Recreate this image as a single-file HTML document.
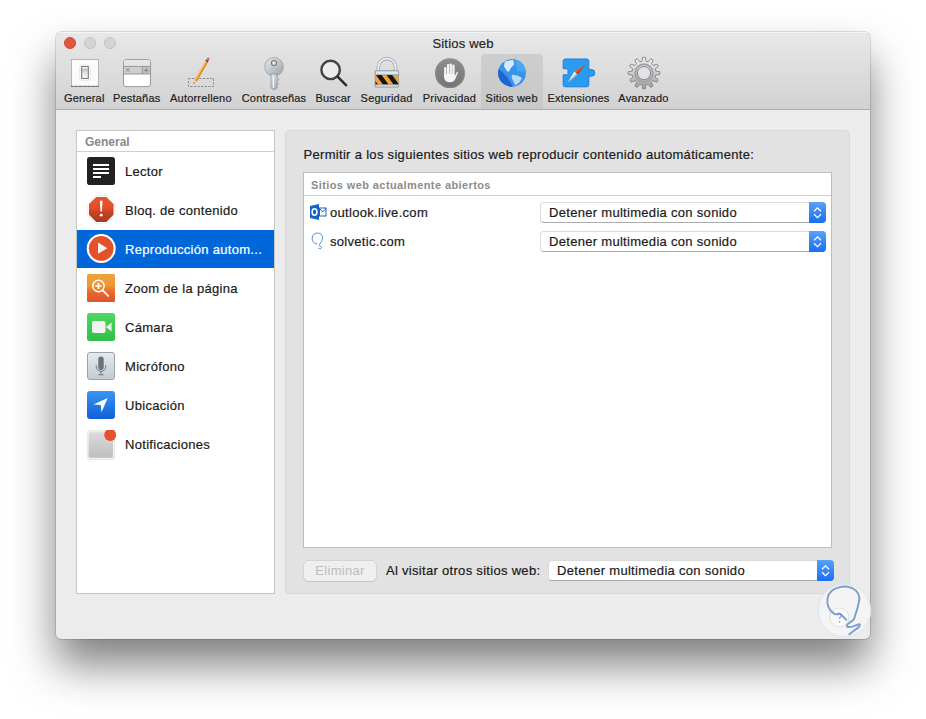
<!DOCTYPE html>
<html><head><meta charset="utf-8">
<style>
*{margin:0;padding:0;box-sizing:border-box}
html,body{width:926px;height:719px;overflow:hidden;background:#fff}
body{position:relative;font-family:"Liberation Sans",sans-serif;color:#1a1a1a;-webkit-text-stroke:0.2px currentColor}
.abs{position:absolute}
#win{position:absolute;left:56px;top:32px;width:814px;height:607px;border-radius:5px;background:#ececec;
 box-shadow:0 0 0 0.5px rgba(0,0,0,0.25),0 26px 44px 0px rgba(0,0,0,0.5);overflow:hidden}
#tb{position:absolute;left:0;top:0;width:814px;height:78px;background:linear-gradient(#e8e8e8,#d2d2d2);border-bottom:1px solid #aeaeae;box-shadow:inset 0 1px 0 rgba(255,255,255,0.55)}
.tl{position:absolute;top:5px;width:12px;height:12px;border-radius:50%;background:#d4d4d4;border:0.5px solid #c2c2c2}
.title{position:absolute;left:0;width:814px;top:3.5px;text-align:center;font-size:13px;letter-spacing:0.2px;color:#262626}
.lab{position:absolute;top:60px;font-size:11px;letter-spacing:0.2px;color:#1e1e1e;white-space:nowrap;transform:translateX(-50%)}
.sel{position:absolute;left:425px;top:22px;width:62px;height:55px;background:linear-gradient(#cecece,#c8c8c8);border-radius:4px 4px 0 0}
#side{position:absolute;left:20px;top:98px;width:199px;height:464px;background:#fff;border:1px solid #c6c6c6}
.sh{position:absolute;left:0;top:0;width:197px;height:21px;border-bottom:1px solid #cfcfcf;font-weight:bold;font-size:12px;color:#8a8a8a;padding:4px 0 0 8px;-webkit-text-stroke:0}
.row{position:absolute;left:0;width:197px;height:39px}
.row .t{position:absolute;left:48px;top:12px;font-size:13px;letter-spacing:0.3px;color:#1a1a1a;white-space:nowrap}
.row.on{background:#0067d9;height:38px}
.row.on .t{color:#fff}
.ic{position:absolute;left:10px;top:5px;width:28px;height:28px}
#panel{position:absolute;left:229px;top:98px;width:565px;height:464px;background:#e2e2e2;border:1px solid #d9d9d9;border-radius:4px}
.ptxt{position:absolute;left:17.5px;top:16px;font-size:13px;letter-spacing:0.31px;white-space:nowrap;color:#1a1a1a}
#tbl{position:absolute;left:17px;top:41px;width:529px;height:376px;background:#fff;border:1px solid #bdbdbd}
.th{position:absolute;left:0;top:0;width:527px;height:23px;border-bottom:1px solid #cdcdcd;font-weight:bold;font-size:11px;letter-spacing:0.4px;color:#8c8c8c;padding:6px 0 0 7px;-webkit-text-stroke:0}
.site{position:absolute;left:26px;font-size:13px;letter-spacing:0.3px;white-space:nowrap;color:#1a1a1a}
.pop{position:absolute;height:21px;background:#fff;border-radius:4px;border:1px solid #dadada;border-bottom-color:#ababab;font-size:13px;letter-spacing:0.3px;color:#1a1a1a;white-space:nowrap}
.pop .pt{position:absolute;left:8px;top:2px}
.pop .ar{position:absolute;right:-1px;top:-1px;width:17px;height:21px;border-radius:0 4px 4px 0;background:linear-gradient(#5aa1f7,#1a6ef2)}
.btn{position:absolute;left:18px;top:430px;width:72px;height:20px;background:#efefef;border-radius:4px;box-shadow:0 0 0 0.5px rgba(0,0,0,0.13),0 0.5px 0.5px rgba(0,0,0,0.15);font-size:13px;letter-spacing:0.3px;color:#bdbdbd;text-align:center;padding-top:2px;-webkit-text-stroke:0}
.ltxt{position:absolute;left:100px;top:432px;font-size:13px;letter-spacing:0.3px;white-space:nowrap;color:#1a1a1a}
</style></head><body>
<svg width="0" height="0" style="position:absolute">
<defs>
 <linearGradient id="gSil" x1="0" y1="0" x2="0" y2="1"><stop offset="0" stop-color="#e2e5e8"/><stop offset="1" stop-color="#9ea3a8"/></linearGradient>
 <linearGradient id="gKey" x1="0" y1="0" x2="1" y2="1"><stop offset="0" stop-color="#e6ecf1"/><stop offset="1" stop-color="#9aa1a7"/></linearGradient>
 <linearGradient id="gGear" x1="0" y1="0" x2="0" y2="1"><stop offset="0" stop-color="#d4d4d4"/><stop offset="1" stop-color="#8c8c8c"/></linearGradient>
 <linearGradient id="gPriv" x1="0" y1="0" x2="0" y2="1"><stop offset="0" stop-color="#8e8e8e"/><stop offset="1" stop-color="#747474"/></linearGradient>
 <radialGradient id="gGlobe" cx="0.35" cy="0.3" r="0.8"><stop offset="0" stop-color="#6cb8ff"/><stop offset="0.6" stop-color="#2a7ed8"/><stop offset="1" stop-color="#1553a8"/></radialGradient>
 <linearGradient id="gPuz" x1="0" y1="0" x2="0" y2="1"><stop offset="0" stop-color="#46a2f6"/><stop offset="1" stop-color="#1d79e6"/></linearGradient>
 <linearGradient id="gZoom" x1="0" y1="0" x2="0" y2="1"><stop offset="0" stop-color="#eea238"/><stop offset="0.4" stop-color="#ec9a33"/><stop offset="0.65" stop-color="#e66a2e"/><stop offset="1" stop-color="#e3502a"/></linearGradient>
 <linearGradient id="gCam" x1="0" y1="0" x2="0" y2="1"><stop offset="0" stop-color="#4fd862"/><stop offset="1" stop-color="#2fbf45"/></linearGradient>
 <linearGradient id="gMic" x1="0" y1="0" x2="0" y2="1"><stop offset="0" stop-color="#e3eaf0"/><stop offset="1" stop-color="#c3cbd3"/></linearGradient>
 <linearGradient id="gLoc" x1="0" y1="0" x2="0" y2="1"><stop offset="0" stop-color="#3796f2"/><stop offset="1" stop-color="#135fd6"/></linearGradient>
 <linearGradient id="gNot" x1="0" y1="0" x2="0" y2="1"><stop offset="0" stop-color="#dcdcdc"/><stop offset="1" stop-color="#bdbdbd"/></linearGradient>
 <linearGradient id="gSw" x1="0" y1="0" x2="0" y2="1"><stop offset="0" stop-color="#f4f4f4"/><stop offset="0.15" stop-color="#f4f4f4"/><stop offset="0.2" stop-color="#bdbdbd"/><stop offset="0.55" stop-color="#e6e6e6"/><stop offset="1" stop-color="#f6f8fa"/></linearGradient>
 <linearGradient id="gPop" x1="0" y1="0" x2="0" y2="1"><stop offset="0" stop-color="#62a8f8"/><stop offset="1" stop-color="#1669ee"/></linearGradient>
</defs>
</svg>

<div id="win">
 <div id="tb">
  <div class="tl" style="left:8px;background:#e2543c;border-color:#cf4632"></div>
  <div class="tl" style="left:28px"></div>
  <div class="tl" style="left:48px"></div>
  <div class="title">Sitios web</div>
  <div class="sel"></div>
  <!-- labels -->
  <div class="lab" style="left:28.3px">General</div>
  <div class="lab" style="left:80.7px">Pestañas</div>
  <div class="lab" style="left:144.9px">Autorrelleno</div>
  <div class="lab" style="left:218px">Contraseñas</div>
  <div class="lab" style="left:277.2px">Buscar</div>
  <div class="lab" style="left:330.6px">Seguridad</div>
  <div class="lab" style="left:393.5px">Privacidad</div>
  <div class="lab" style="left:455.7px">Sitios web</div>
  <div class="lab" style="left:522.5px">Extensiones</div>
  <div class="lab" style="left:587.5px">Avanzado</div>
 </div>
 <div id="side">
  <div class="sh">General</div>
  <div class="row" style="top:21px"><div class="t">Lector</div></div>
  <div class="row" style="top:60px"><div class="t">Bloq. de contenido</div></div>
  <div class="row on" style="top:99px"><div class="t">Reproducción autom...</div></div>
  <div class="row" style="top:138px"><div class="t">Zoom de la página</div></div>
  <div class="row" style="top:177px"><div class="t">Cámara</div></div>
  <div class="row" style="top:216px"><div class="t">Micrófono</div></div>
  <div class="row" style="top:255px"><div class="t">Ubicación</div></div>
  <div class="row" style="top:294px"><div class="t">Notificaciones</div></div>
 </div>
 <div id="panel">
  <div class="ptxt">Permitir a los siguientes sitios web reproducir contenido automáticamente:</div>
  <div id="tbl">
   <div class="th">Sitios web actualmente abiertos</div>
   <div class="site" style="top:31.6px">outlook.live.com</div>
   <div class="site" style="top:60.6px">solvetic.com</div>
   <div class="pop" style="left:236px;top:29px;width:286px"><div class="pt">Detener multimedia con sonido</div><div class="ar"><svg width="17" height="20" style="position:absolute;left:0;top:0"><path d="M5 9.2 L8.5 5.8 L12 9.2 M5 12.3 L8.5 15.7 L12 12.3" fill="none" stroke="#fff" stroke-width="1.25"/></svg></div></div>
   <div class="pop" style="left:236px;top:58px;width:286px"><div class="pt">Detener multimedia con sonido</div><div class="ar"><svg width="17" height="20" style="position:absolute;left:0;top:0"><path d="M5 9.2 L8.5 5.8 L12 9.2 M5 12.3 L8.5 15.7 L12 12.3" fill="none" stroke="#fff" stroke-width="1.25"/></svg></div></div>
  </div>
  <div class="btn">Eliminar</div>
  <div class="ltxt">Al visitar otros sitios web:</div>
  <div class="pop" style="left:262px;top:429px;width:286px"><div class="pt">Detener multimedia con sonido</div><div class="ar"><svg width="17" height="20" style="position:absolute;left:0;top:0"><path d="M5 9.2 L8.5 5.8 L12 9.2 M5 12.3 L8.5 15.7 L12 12.3" fill="none" stroke="#fff" stroke-width="1.25"/></svg></div></div>
 </div>
</div>

<!-- toolbar icons -->
<svg class="abs" style="left:71px;top:59px" width="28" height="28">
 <rect x="0.5" y="0.5" width="27" height="27" fill="#fbfbfb" stroke="#a8a8a8" stroke-width="0.8"/>
 <line x1="0" y1="27.4" x2="28" y2="27.4" stroke="#5e5e5e" stroke-width="1.1" stroke-dasharray="0.8 0.5"/>
 <rect x="8.6" y="6" width="10.8" height="15.4" rx="2.5" fill="#fff" stroke="#e2e2e2" stroke-width="0.8"/>
 <rect x="10.7" y="7.5" width="6.6" height="11.9" fill="url(#gSw)" stroke="#727272" stroke-width="1"/>
</svg>
<svg class="abs" style="left:123px;top:59px" width="29" height="29">
 <rect x="0.5" y="0.6" width="27" height="27" rx="2.6" fill="#fff" stroke="#8e8e8e" stroke-width="0.9"/>
 <rect x="1" y="1.1" width="26" height="6.3" rx="2" fill="#e6e6e6"/>
 <rect x="1" y="7.4" width="26" height="7.6" fill="#cfcfcf"/>
 <rect x="19.3" y="7.4" width="7.7" height="7.6" fill="#c4c4c4"/>
 <path d="M0.6 7.4 H27.4 M0.6 15 H27.4 M19.3 7.4 V15" stroke="#8e8e8e" stroke-width="0.9"/>
 <path d="M3.2 9.3 l3.2 3.4 M6.4 9.3 l-3.2 3.4" stroke="#7e7e7e" stroke-width="0.9"/>
 <path d="M23.2 9 v4.6 M20.9 11.3 h4.6" stroke="#7e7e7e" stroke-width="0.9"/>
</svg>
<svg class="abs" style="left:186px;top:55px" width="32" height="34">
 <rect x="2.5" y="23.5" width="25" height="8" fill="none" stroke="#8a8a8a" stroke-dasharray="2.2 1.4"/>
 <path d="M8.15 25.27 L19.44 5.78 L21.86 7.18 L10.57 26.67 Z" fill="#f2a93a"/>
 <path d="M9.36 25.97 L20.65 6.48 L21.86 7.18 L10.57 26.67 Z" fill="#d48a22"/>
 <path d="M9.0 25.7 L20.1 6.2" stroke="#fbe0a8" stroke-width="0.6"/>
 <path d="M7.6 29 L8.15 25.27 L10.57 26.67 Z" fill="#f3d9a8"/>
 <path d="M7.6 29 L7.85 27.3 L8.95 27.95 Z" fill="#333"/>
 <path d="M19.44 5.78 L21.86 7.18 L22.61 5.9 L20.19 4.5 Z" fill="#3a3a3a"/>
 <path d="M20.19 4.5 L22.61 5.9 L23.81 3.8 L21.39 2.4 Z" fill="#a878d0"/>
 <circle cx="22.5" cy="3.2" r="0.6" fill="#e05050"/>
</svg>
<svg class="abs" style="left:262px;top:56px" width="24" height="36">
 <circle cx="12" cy="10.8" r="9.3" fill="url(#gKey)" stroke="#8d9399" stroke-width="0.7"/>
 <circle cx="12" cy="7" r="2.5" fill="#e6e6e6" stroke="#6f757b" stroke-width="1.1"/>
 <path d="M9 18 H15 V22 L17 23.5 L15 25 V26.5 L16.5 28 L15 29.5 V32 L12 34 L9 32 Z" fill="url(#gKey)" stroke="#858b91" stroke-width="0.7"/>
 <line x1="11.5" y1="20" x2="11.5" y2="32" stroke="#f5f5f5" stroke-width="1"/>
</svg>
<svg class="abs" style="left:316px;top:56px" width="34" height="34">
 <circle cx="14.6" cy="13.9" r="9.2" fill="#ebebeb" stroke="#424242" stroke-width="2.4"/>
 <line x1="21.6" y1="20.6" x2="30" y2="29.2" stroke="#2e2e2e" stroke-width="2.6" stroke-linecap="round"/>
</svg>
<svg class="abs" style="left:372px;top:55px" width="30" height="34">
 <path d="M6.3 16.5 V12.3 A8.6 8.6 0 0 1 23.5 12.3 V16.5" fill="none" stroke="#98a4b0" stroke-width="3.4"/>
 <path d="M6.3 16.5 V12.3 A8.6 8.6 0 0 1 23.5 12.3 V16.5" fill="none" stroke="#eef2f6" stroke-width="1.8"/>
 <rect x="3.2" y="15.9" width="23.4" height="16.1" rx="0.8" fill="#eea23a" stroke="#8d96a0" stroke-width="0.7"/>
 <clipPath id="lk"><rect x="3.5" y="19.8" width="22.8" height="10"/></clipPath>
 <g clip-path="url(#lk)" fill="#141414">
  <path d="M3.8 19.8 H9.4 L16.7 29.8 H11.1Z"/><path d="M14.4 19.8 H20 L27.3 29.8 H21.7Z"/><path d="M-6.8 19.8 H-1.2 L6.1 29.8 H0.5Z"/>
 </g>
 <rect x="3.2" y="15.9" width="23.4" height="3.9" fill="#dfe6ed" stroke="#8d96a0" stroke-width="0.7"/>
 <rect x="3.2" y="29.8" width="23.4" height="2.2" fill="#d5dce3" stroke="#8d96a0" stroke-width="0.6"/>
</svg>
<svg class="abs" style="left:435px;top:57px" width="31" height="31">
 <circle cx="15" cy="16.2" r="15" fill="url(#gPriv)"/>
 <circle cx="15" cy="16.2" r="14.5" fill="none" stroke="#9a9a9a" stroke-width="0.8" opacity="0.6"/>
 <g fill="#f4f4f4">
  <rect x="9.1" y="10" width="2.3" height="11" rx="1.1"/>
  <rect x="11.9" y="7" width="2.3" height="13" rx="1.1"/>
  <rect x="14.6" y="6.4" width="2.3" height="13" rx="1.1"/>
  <rect x="17.3" y="7.6" width="2.3" height="13" rx="1.1"/>
  <path d="M9.1 17 H19.6 V19.5 L21.8 15.2 C22.3 14.4 23.3 14.7 23 15.6 L20.5 21.5 C19.6 23.8 18 25.3 15 25.3 C11.5 25.3 9.3 23.5 9.1 20.5 Z"/>
 </g>
</svg>
<svg class="abs" style="left:497px;top:58px" width="30" height="30">
 <clipPath id="gc"><circle cx="15" cy="14.9" r="13.9"/></clipPath>
 <g clip-path="url(#gc)">
  <rect x="0" y="0" width="30" height="30" fill="#3a93ea"/>
  <path d="M0 10 C6 14 12 19 16 30 H0Z" fill="#1f66cc"/>
  <path d="M18 2 C24 3 29 8 29 14 L20 13 Z" fill="#45aaf2"/>
  <path d="M7.8 3.5 L16.1 1.8 L17.3 6.2 L13.9 10.1 L11.7 14 L9.5 12.4 L7 8.5 Z" fill="#d6eafb"/>
  <path d="M15 16.8 L20.6 17.4 L25 20.1 L22.8 24 L18.4 27.4 L16.1 22.9 L14.5 19 Z" fill="#b9d9f5"/>
 </g>
</svg>
<svg class="abs" style="left:561px;top:57px" width="37" height="32">
 <path d="M4.2 2 H25.8 A2 2 0 0 1 27.8 4 V12.6 H30.5 A3.3 3.3 0 0 1 33.8 15.9 A3.3 3.3 0 0 1 30.5 19.2 H27.8 V27.8 A2 2 0 0 1 25.8 29.8 H4.2 A2 2 0 0 1 2.2 27.8 V17.8 H5.5 A1.5 1.5 0 0 0 7 16.3 V13.2 A1.5 1.5 0 0 0 5.5 11.7 H2.2 V4 A2 2 0 0 1 4.2 2 Z" fill="#2a9bf0" stroke="#1b7fe3" stroke-width="1"/>
 <path d="M24.8 7.2 L13.4 14.6 L15.2 16.4 Z" fill="#f05a2a"/>
 <path d="M24.8 7.2 L15.2 16.4 L16.6 17.6 Z" fill="#b8381c"/>
 <path d="M6.8 25.5 L13.4 14.6 L15.2 16.4 Z" fill="#fafafa"/>
 <path d="M6.8 25.5 L15.2 16.4 L16.6 17.6 Z" fill="#c4c4c4"/>
</svg>
<svg class="abs" style="left:627px;top:56px" width="34" height="34">
 <linearGradient id="gG2" x1="0" y1="0" x2="0" y2="1"><stop offset="0" stop-color="#eef1f4"/><stop offset="0.5" stop-color="#c9cdd1"/><stop offset="1" stop-color="#9a9c9e"/></linearGradient>
 <path d="M15.60 1.36 L18.40 1.36 L18.88 5.25 L21.30 5.90 L23.65 2.77 L26.09 4.17 L24.55 7.77 L26.33 9.55 L29.93 8.01 L31.33 10.45 L28.20 12.80 L28.85 15.22 L32.74 15.70 L32.74 18.50 L28.85 18.98 L28.20 21.40 L31.33 23.75 L29.93 26.19 L26.33 24.65 L24.55 26.43 L26.09 30.03 L23.65 31.43 L21.30 28.30 L18.88 28.95 L18.40 32.84 L15.60 32.84 L15.12 28.95 L12.70 28.30 L10.35 31.43 L7.91 30.03 L9.45 26.43 L7.67 24.65 L4.07 26.19 L2.67 23.75 L5.80 21.40 L5.15 18.98 L1.26 18.50 L1.26 15.70 L5.15 15.22 L5.80 12.80 L2.67 10.45 L4.07 8.01 L7.67 9.55 L9.45 7.77 L7.91 4.17 L10.35 2.77 L12.70 5.90 L15.12 5.25Z" fill="url(#gG2)" stroke="#858585" stroke-width="0.9" stroke-linejoin="round"/>
 <circle cx="17" cy="17.1" r="8.8" fill="none" stroke="#a3a3a3" stroke-width="2"/>
 <circle cx="17" cy="17.1" r="6.6" fill="#e3e1e3" stroke="#7d7d7d" stroke-width="0.9"/>
</svg>

<!-- sidebar icons -->
<svg class="abs" style="left:87px;top:157px" width="28" height="28">
 <rect x="0" y="0" width="28" height="28" rx="2.8" fill="#222"/>
 <rect x="6" y="7" width="16" height="2" fill="#fff"/><rect x="6" y="11" width="16" height="2" fill="#fff"/>
 <rect x="6" y="15" width="16" height="2" fill="#fff"/><rect x="6" y="19" width="8" height="2" fill="#fff"/>
</svg>
<svg class="abs" style="left:87px;top:195px" width="29" height="29">
 <linearGradient id="gBlq" x1="0" y1="0" x2="0" y2="1"><stop offset="0" stop-color="#e4572f"/><stop offset="0.45" stop-color="#e24f28"/><stop offset="0.6" stop-color="#c44424"/><stop offset="1" stop-color="#a8391f"/></linearGradient>
 <path d="M8.7 0.6 H19.8 L27.9 8.7 V20.2 L19.8 28.3 H8.7 L0.6 20.2 V8.7 Z" fill="none" stroke="#d8d8d8" stroke-width="0.6"/>
 <path d="M8.9 1.3 H19.6 L27.2 8.9 V20 L19.6 27.6 H8.9 L1.3 20 V8.9 Z" fill="url(#gBlq)" stroke="#fff" stroke-width="1.3"/>
 <path d="M12.9 5.8 H15.5 L14.9 16.5 H13.5 Z" fill="#fff"/>
 <circle cx="14.2" cy="20.2" r="1.4" fill="#fff"/>
</svg>
<svg class="abs" style="left:86px;top:234px" width="30" height="30">
 <circle cx="15.2" cy="14.4" r="14.5" fill="#fff"/>
 <circle cx="15.2" cy="14.4" r="12.4" fill="#e4522a"/>
 <path d="M12 8.6 L21.3 14.2 L12 19.8 Z" fill="#f4f4f4"/>
</svg>
<svg class="abs" style="left:87px;top:274px" width="28" height="28">
 <rect x="0" y="0" width="28" height="28" rx="1.5" fill="url(#gZoom)"/>
 <circle cx="11.5" cy="12" r="5.7" fill="none" stroke="#fff" stroke-width="1.5"/>
 <path d="M11.5 9.1 V14.9 M8.6 12 H14.4" stroke="#fff" stroke-width="1.7"/>
 <line x1="15.7" y1="16.3" x2="21.3" y2="22" stroke="#fff" stroke-width="1.7" stroke-linecap="round"/>
</svg>
<svg class="abs" style="left:87px;top:313px" width="28" height="28">
 <rect x="0" y="0" width="28" height="28" rx="2.5" fill="url(#gCam)"/>
 <rect x="5" y="8" width="13.5" height="12" rx="2" fill="#f3f3f3"/>
 <path d="M19 14 L24.5 9.5 V18.5 Z" fill="#f3f3f3"/>
</svg>
<svg class="abs" style="left:87px;top:352px" width="28" height="28">
 <rect x="0.5" y="0.5" width="27" height="27" rx="2.5" fill="url(#gMic)" stroke="#9ba2a8"/>
 <rect x="11.3" y="4.6" width="5.4" height="13.4" rx="2.7" fill="#6a7178"/>
 <path d="M9.2 13 V14.5 A4.8 4.8 0 0 0 18.8 14.5 V13" fill="none" stroke="#6f767c" stroke-width="1"/>
 <path d="M14 19.3 V22.5 M11.3 22.8 H16.7" stroke="#6f767c" stroke-width="1"/>
</svg>
<svg class="abs" style="left:87px;top:391px" width="28" height="28">
 <rect x="0" y="0" width="28" height="28" rx="3" fill="url(#gLoc)"/>
 <path d="M20.7 7 L6.4 13.6 L13.8 13.9 L14.5 21.3 Z" fill="#fff"/>
</svg>
<svg class="abs" style="left:87px;top:429.8px" width="30" height="30">
 <rect x="0.8" y="1.5" width="26" height="27" rx="2" fill="url(#gNot)" stroke="#f5f5f5" stroke-width="1.6"/>
 <rect x="0" y="0.8" width="27.6" height="28.5" rx="2.5" fill="none" stroke="#d0d0d0" stroke-width="0.6"/>
 <circle cx="23.2" cy="5" r="6" fill="#e5502e"/>
</svg>

<!-- site icons -->
<svg class="abs" style="left:310px;top:204px" width="17" height="17">
 <path d="M0 2 L9 0 V16 L0 14 Z" fill="#1565c8"/>
 <ellipse cx="4.5" cy="8" rx="2.4" ry="3.2" fill="none" stroke="#fff" stroke-width="1.5"/>
 <rect x="9.5" y="4" width="6.5" height="8" fill="#fff" stroke="#1565c8" stroke-width="1"/>
 <path d="M9.5 4.5 L12.7 8 L16 4.5" fill="none" stroke="#1565c8" stroke-width="1"/>
</svg>
<svg class="abs" style="left:311px;top:232px" width="14" height="18">
 <path d="M6.5 12 C3 12 1 9 1.2 6 C1.5 2.8 4 0.8 6.8 1 C9.8 1.2 11.8 3.5 11.5 6.5 C11.2 9 9.5 10.5 8.5 12.5 C8 13.5 8.5 14.5 9.5 14.5 C10.5 14.5 11 15.5 10 16.5 C9 17 7.5 16.5 7 15.8" fill="none" stroke="#5b8fc7" stroke-width="1"/>
</svg>

<!-- watermark -->
<svg class="abs" style="left:815px;top:580px" width="62" height="62">
 <circle cx="29.6" cy="30.5" r="26.2" fill="#f4f4f4" stroke="#dde5ee" stroke-width="1"/>
 <circle cx="24.4" cy="37.5" r="9.5" fill="#f9f9f9" stroke="#d9d9d9" stroke-width="0.8"/>
 <path d="M31.2 39.8 C30.1 38.8 26.8 34.9 24.8 33.9 C22.8 32.9 21.3 35.0 19.4 33.9 C17.5 32.8 14.6 29.7 13.5 27.1 C12.4 24.5 12.1 20.8 12.6 18.1 C13.1 15.4 14.7 12.6 16.7 10.8 C18.7 9.0 22.1 7.8 24.8 7.1 C27.5 6.4 30.4 6.2 33.0 6.8 C35.6 7.3 38.8 8.7 40.7 10.4 C42.6 12.1 43.9 14.6 44.3 17.2 C44.7 19.8 43.6 23.2 42.9 26.2 C42.2 29.2 41.0 33.0 40.2 35.3 C39.5 37.6 39.6 38.4 38.4 39.8 C37.2 41.2 34.0 42.8 33.0 43.9 C31.9 45.0 31.4 46.1 32.1 46.6 C32.9 47.1 35.5 47.0 37.5 46.6 C39.5 46.2 43.2 44.2 44.3 44.3 C45.3 44.4 44.8 45.9 43.8 47.0 C42.8 48.1 40.0 49.9 38.4 51.1 C36.8 52.3 35.0 53.7 34.3 54.2" fill="none" stroke="#7c9ecb" stroke-width="1.9" stroke-linecap="round"/>
 <path d="M22.6 35.5 A1.9 1.9 0 1 1 24.8 37.2 V39" fill="none" stroke="#4f8be0" stroke-width="0.9"/>
 <circle cx="24.6" cy="41.8" r="0.7" fill="#4f8be0"/>
</svg>

</body></html>
